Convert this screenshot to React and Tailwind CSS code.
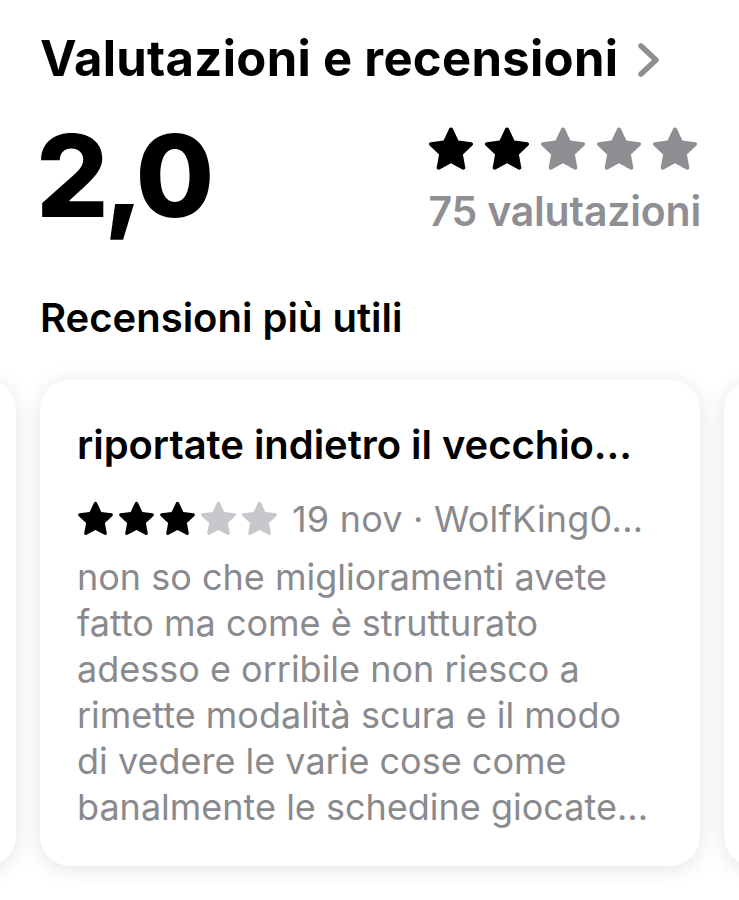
import React from "react";

const Star = ({ className, size = 40 }) => (
  <svg width={size} height={size} viewBox="0 0 24 24" className={className}>
    <path
      fill="currentColor"
      d="M12 1.6c.36 0 .66.2.82.52l2.6 5.5 5.96.77c.35.05.64.29.75.62.11.34.01.7-.25.94l-4.38 4.14 1.1 5.93c.06.35-.08.7-.36.9-.29.2-.66.22-.97.06L12 18.1l-5.27 2.88c-.31.16-.68.14-.97-.06-.28-.2-.42-.55-.36-.9l1.1-5.93L2.12 9.95a.93.93 0 0 1-.25-.94c.11-.33.4-.57.75-.62l5.96-.77 2.6-5.5c.16-.32.46-.52.82-.52z"
    />
  </svg>
);

export default function App() {
  const body = [
    "non so che miglioramenti avete",
    "fatto ma come è strutturato",
    "adesso e orribile non riesco a",
    "rimette modalità scura e il modo",
    "di vedere le varie cose come",
    "banalmente le schedine giocate...",
  ];
  return (
    <div className="w-[739px] h-[900px] bg-white overflow-hidden font-['Inter',sans-serif] antialiased">
      {/* Header */}
      <div className="flex items-center pl-[40px] pt-[29px]">
        <h1 className="text-[49px] leading-[60px] font-bold text-black tracking-[0.3px] whitespace-nowrap">
          Valutazioni e recensioni
        </h1>
        <svg width="28" height="36" viewBox="0 0 28 36" className="ml-[18px] mt-[2px]">
          <path d="M5 4 L20 18 L5 32" fill="none" stroke="#8e8e93" strokeWidth="5.5" strokeLinecap="round" strokeLinejoin="round" />
        </svg>
      </div>

      {/* Rating row */}
      <div className="flex justify-between pl-[36px] pr-[38px] mt-[30px] h-[160px]">
        <div className="text-[114px] leading-[114px] font-extrabold text-black tracking-[-5px]">2,0</div>
        <div className="flex flex-col items-end pt-[5px]">
          <div className="flex gap-[4px]">
            <Star className="text-black" size={52} />
            <Star className="text-black" size={52} />
            <Star className="text-[#8e8e93]" size={52} />
            <Star className="text-[#8e8e93]" size={52} />
            <Star className="text-[#8e8e93]" size={52} />
          </div>
          <div className="text-[41px] leading-[48px] font-semibold text-[#8e8e93] tracking-[-0.2px] mt-[11px] whitespace-nowrap">
            75 valutazioni
          </div>
        </div>
      </div>

      {/* Section title */}
      <div className="pl-[40px] mt-[15px] text-[40px] leading-[48px] font-semibold text-black tracking-[0px]">
        Recensioni più utili
      </div>

      {/* Carousel */}
      <div className="flex gap-[24px] mt-[38px] ml-[-644px] pb-[40px]">
        <div className="w-[660px] h-[486px] shrink-0 bg-white rounded-[30px] shadow-[0_3px_22px_rgba(0,0,0,0.11)]" />
        <div className="w-[660px] h-[486px] shrink-0 bg-white rounded-[30px] shadow-[0_3px_22px_rgba(0,0,0,0.11)] pl-[37px] pt-[41px]">
          <div className="text-[40px] leading-[48px] font-semibold text-black tracking-[-0.05px] whitespace-nowrap">
            riportate indietro il vecchio...
          </div>
          <div className="flex items-center mt-[28px] h-[44px]">
            <div className="flex -ml-[2px]">
              <Star className="text-black" size={41} />
              <Star className="text-black" size={41} />
              <Star className="text-black" size={41} />
              <Star className="text-[#c7c7cc]" size={41} />
              <Star className="text-[#c7c7cc]" size={41} />
            </div>
            <div className="ml-[12px] text-[36px] leading-[44px] text-[#8a8a8e] tracking-[0.2px] whitespace-nowrap">
              19 nov · WolfKing0...
            </div>
          </div>
          <div className="mt-[13px] text-[36px] leading-[46px] text-[#8a8a8e] tracking-[0px]">
            {body.map((l, i) => (
              <div key={i} className="whitespace-nowrap">{l}</div>
            ))}
          </div>
        </div>
        <div className="w-[660px] h-[486px] shrink-0 bg-white rounded-[30px] shadow-[0_3px_22px_rgba(0,0,0,0.11)]" />
      </div>
    </div>
  );
}
